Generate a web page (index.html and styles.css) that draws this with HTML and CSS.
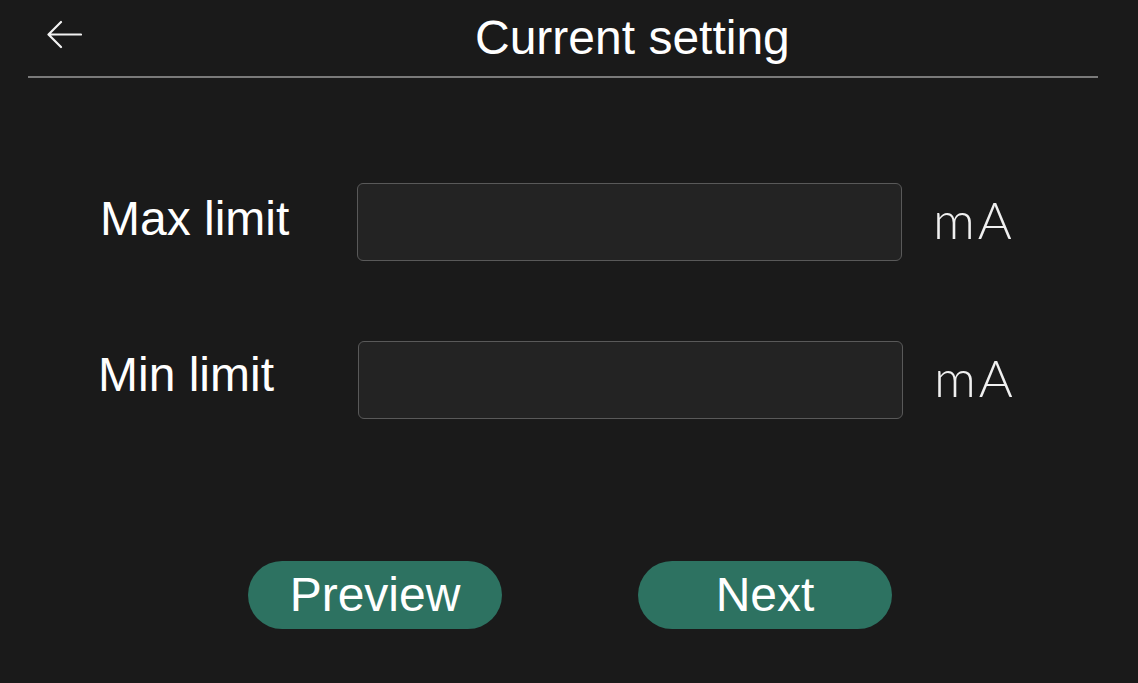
FILE: index.html
```html
<!DOCTYPE html>
<html>
<head>
<meta charset="utf-8">
<link rel="stylesheet" href="styles.css">
</head>
<body>
<div class="screen">
  <header class="header">
    <svg class="back" width="36" height="30" viewBox="0 0 36 30">
      <path d="M35 14.5 H3 M15 2 L2.5 14.5 L15 27" fill="none" stroke="#f2f2f2" stroke-width="2.2" stroke-linecap="round" stroke-linejoin="round"/>
    </svg>
    <h1 class="title">Current setting</h1>
  </header>
  <main class="form">
    <div class="row">
      <label class="label">Max limit</label>
      <div class="input"></div>
      <span class="unit">mA</span>
    </div>
    <div class="row row-min">
      <label class="label label-min">Min limit</label>
      <div class="input"></div>
      <span class="unit">mA</span>
    </div>
  </main>
  <div class="actions">
    <button class="btn">Preview</button>
    <button class="btn">Next</button>
  </div>
</div>
</body>
</html>
```
FILE: styles.css
```css
html, body {
  margin: 0;
  padding: 0;
  background: #1a1a1a;
}
body {
  width: 1138px;
  height: 683px;
  overflow: hidden;
  font-family: "Liberation Sans", Arial, sans-serif;
  color: #ffffff;
}
.screen {
  display: flex;
  flex-direction: column;
}
.header {
  display: flex;
  align-items: center;
  height: 76px;
  margin: 0 40px 0 28px;
  border-bottom: 2px solid #7a7a7a;
}
.back {
  margin-left: 18px;
  margin-top: -6px;
  flex: none;
}
.title {
  margin: 0 0 0 393px;
  font-size: 48px;
  font-weight: normal;
  line-height: 1;
  color: #ffffff;
}
.form {
  display: flex;
  flex-direction: column;
  gap: 80px;
  margin-top: 105px;
  padding-left: 100px;
}
.row {
  display: flex;
  align-items: center;
}
.row-min {
  padding-left: 1px;
}
.label {
  width: 257px;
  font-size: 48px;
  line-height: 1;
  padding-bottom: 6px;
  color: #ffffff;
}
.label-min {
  margin-left: -3px;
  width: 260px;
  padding-bottom: 10px;
}
.input {
  width: 543px;
  height: 76px;
  border: 1px solid #595959;
  border-radius: 6px;
  background: #232323;
  box-sizing: content-box;
}
.unit {
  margin-left: 31px;
  padding-bottom: 6px;
  font-family: "Lato", "Open Sans", sans-serif;
  font-weight: 300;
  font-size: 52px;
  letter-spacing: 3px;
  color: #f0f0f0;
}
.actions {
  display: flex;
  justify-content: center;
  gap: 136px;
  margin-top: 142px;
  padding-left: 2px;
}
.btn {
  width: 254px;
  height: 68px;
  border: none;
  border-radius: 34px;
  background: #2d7261;
  color: #ffffff;
  font-family: "Liberation Sans", Arial, sans-serif;
  font-size: 48px;
  line-height: 1;
  padding: 0;
}
```
